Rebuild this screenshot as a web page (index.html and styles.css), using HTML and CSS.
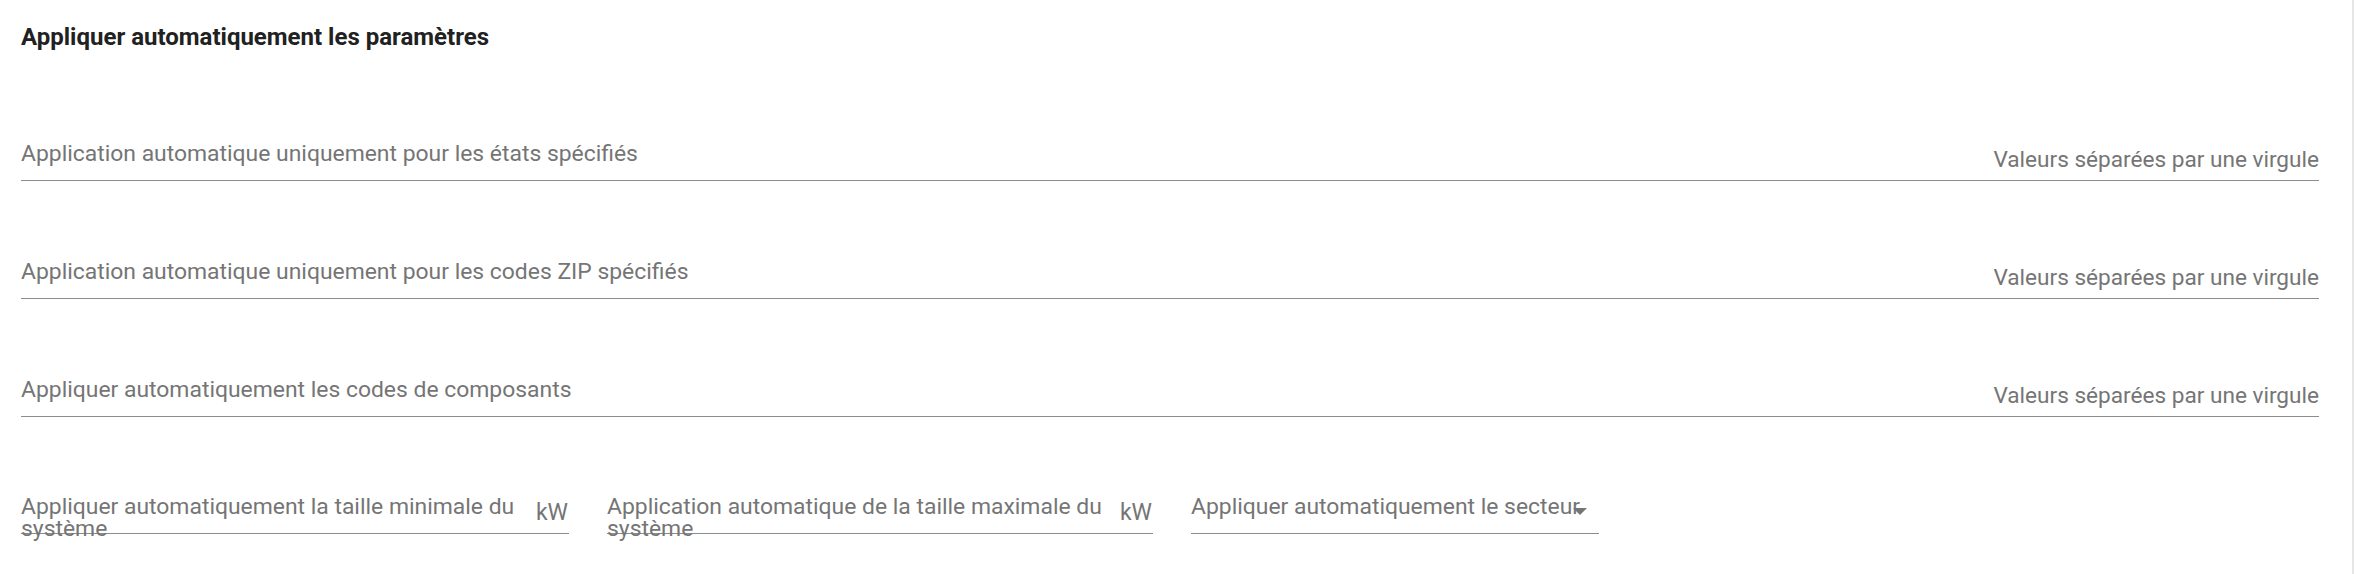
FILE: index.html
```html
<!DOCTYPE html>
<html lang="fr">
<head>
<meta charset="utf-8">
<title>Appliquer automatiquement les paramètres</title>
<link rel="stylesheet" href="styles.css">
</head>
<body>
<div class="panel">
  <h2 class="title">Appliquer automatiquement les paramètres</h2>
  <div class="rows">
    <div class="row">
      <div class="field wide">
        <span class="label">Application automatique uniquement pour les états spécifiés</span>
        <span class="hint">Valeurs séparées par une virgule</span>
      </div>
    </div>
    <div class="row">
      <div class="field wide">
        <span class="label">Application automatique uniquement pour les codes ZIP spécifiés</span>
        <span class="hint">Valeurs séparées par une virgule</span>
      </div>
    </div>
    <div class="row">
      <div class="field wide">
        <span class="label">Appliquer automatiquement les codes de composants</span>
        <span class="hint">Valeurs séparées par une virgule</span>
      </div>
    </div>
    <div class="row small-row">
      <div class="field num f1">
        <span class="label wrap">Appliquer automatiquement la taille minimale du système</span>
        <span class="suffix">kW</span>
      </div>
      <div class="field num f2">
        <span class="label wrap">Application automatique de la taille maximale du système</span>
        <span class="suffix">kW</span>
      </div>
      <div class="field select">
        <span class="label one">Appliquer automatiquement le secteur</span>
        <span class="arrow"></span>
      </div>
    </div>
  </div>
</div>
</body>
</html>
```

FILE: styles.css
```css
html, body {
  margin: 0;
  padding: 0;
  background: #ffffff;
}

body {
  font-family: Roboto, "Liberation Sans", Arial, sans-serif;
}

.panel {
  box-sizing: border-box;
  width: 2354px;
  height: 574px;
  padding: 23px 33px 0 21px;
  border-right: 2px solid #e6e6e6;
}

.title {
  margin: 0;
  font-size: 24px;
  line-height: 28px;
  font-weight: 700;
  color: #212121;
}

.rows {
  display: flex;
  flex-direction: column;
}

.row {
  height: 118px;
  display: flex;
  align-items: flex-end;
}

.row:first-child {
  height: 130px;
}

.row.small-row {
  height: 117px;
  gap: 38px;
}

.field {
  box-sizing: border-box;
  border-bottom: 1px solid #8c8c8c;
  display: flex;
  color: #757575;
}

.field.wide {
  flex: 1;
  justify-content: space-between;
  align-items: flex-end;
}

.wide .label {
  font-size: 22.9px;
  line-height: 25px;
  padding-bottom: 14px;
}

.wide .hint {
  font-size: 22.6px;
  line-height: 24px;
  padding-bottom: 8px;
}

.field.num,
.field.select {
  height: 38px;
  align-items: flex-start;
  position: relative;
}

.f1 { width: 548px; }
.f2 { width: 546px; }
.select { width: 408px; }

.num .label,
.select .label {
  font-size: 22.9px;
  line-height: 22px;
}

.label.wrap {
  width: 508px;
  height: 22px;
  overflow: visible;
}

.suffix {
  margin-left: auto;
  margin-top: 6px;
  font-size: 23px;
  line-height: 22px;
  padding-right: 1px;
}

.label.one {
  white-space: nowrap;
}

.arrow {
  position: absolute;
  right: 12px;
  top: 12px;
  width: 0;
  height: 0;
  border-left: 7px solid transparent;
  border-right: 7px solid transparent;
  border-top: 7px solid #757575;
}
```
